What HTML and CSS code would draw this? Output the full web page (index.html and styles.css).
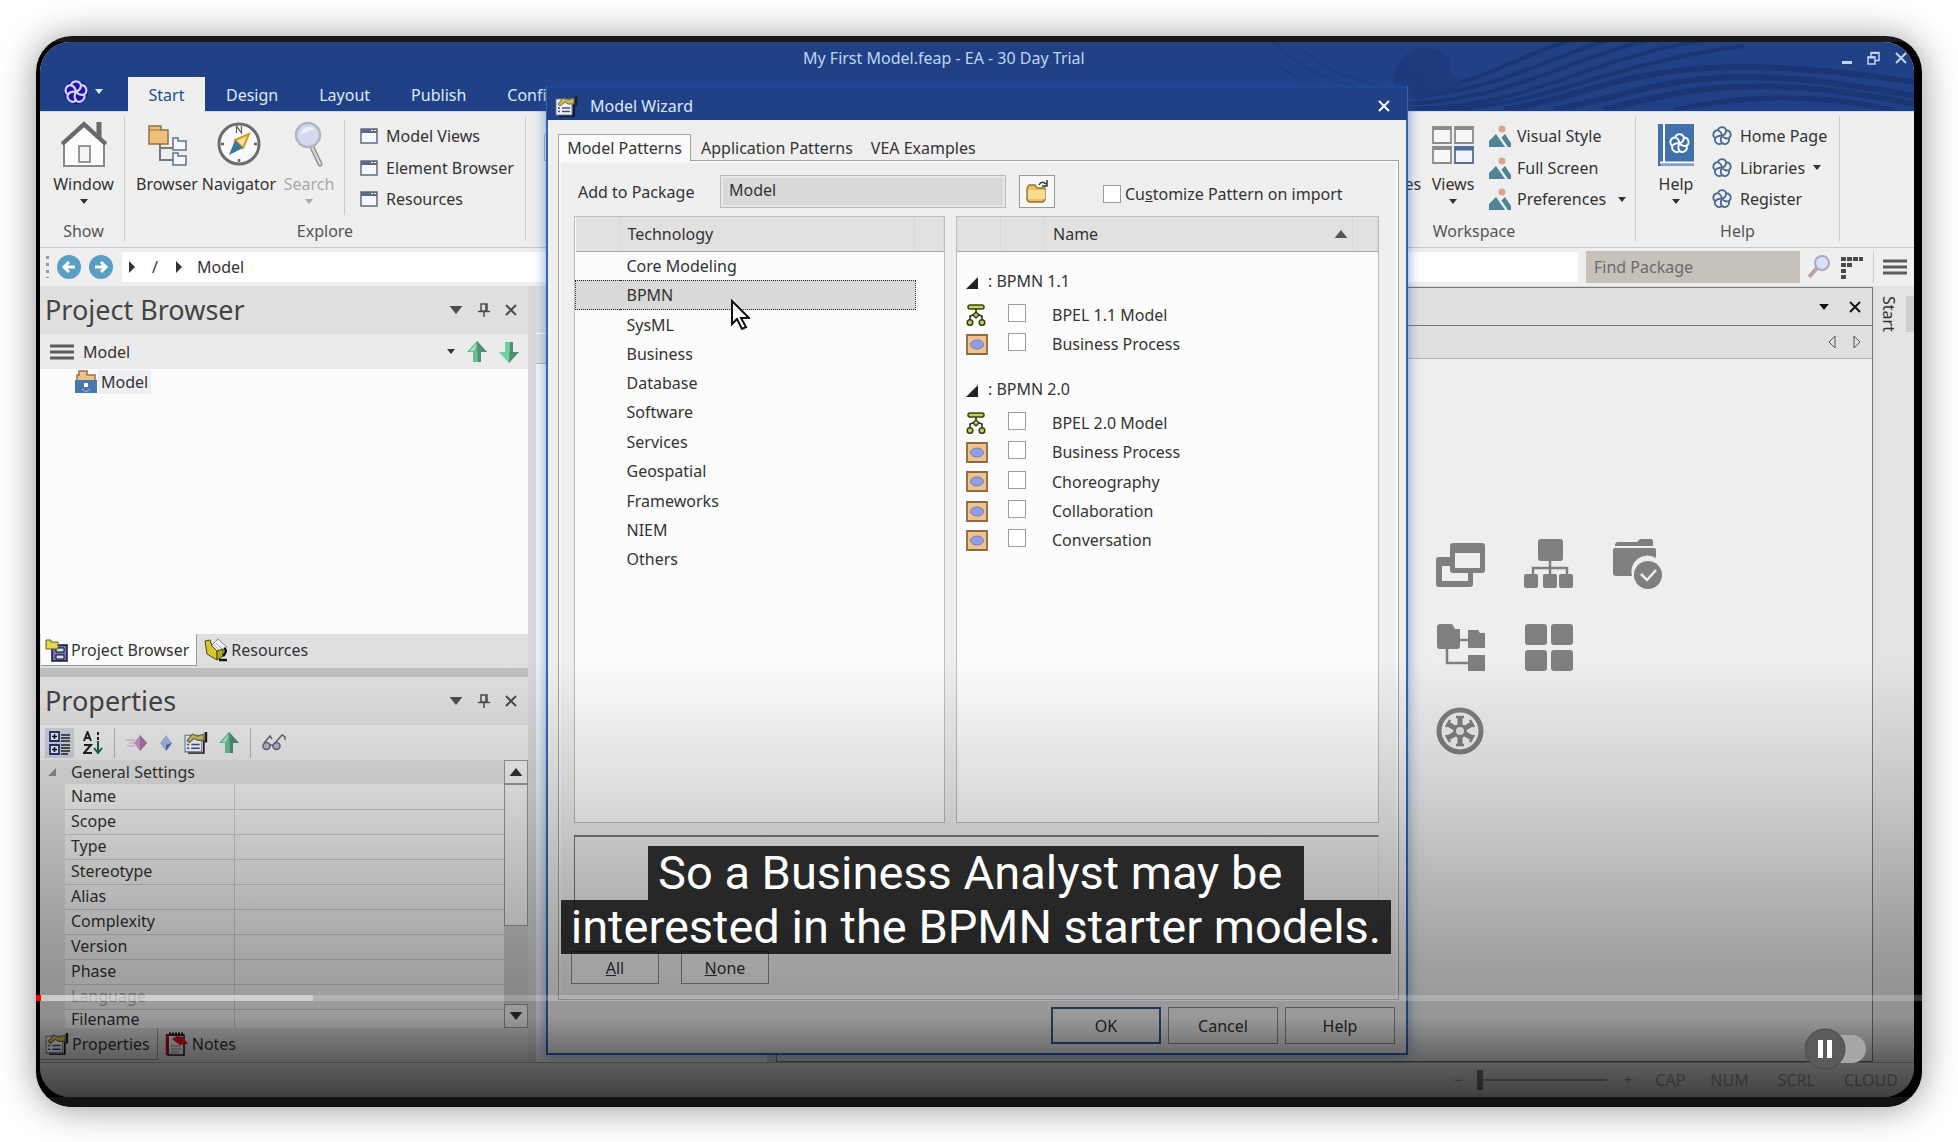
FILE: index.html
```html
<!DOCTYPE html>
<html lang="en">
<head>
<meta charset="utf-8">
<title>My First Model.feap - EA - 30 Day Trial</title>
<link rel="stylesheet" href="styles.css">
</head>
<body>
<svg class="defs" aria-hidden="true">
  <defs>
    <symbol id="caret" viewBox="0 0 8 5"><path d="M0 0h8L4 5z" fill="currentColor"/></symbol>
    <symbol id="right" viewBox="0 0 6 12"><path d="M0 0l6 6-6 6z" fill="currentColor"/></symbol>
    <symbol id="cross" viewBox="0 0 12 12"><path d="M1 1l10 10M11 1L1 11" stroke="currentColor" stroke-width="2" fill="none"/></symbol>
    <symbol id="pin" viewBox="0 0 12 14"><path d="M3 1h6v7H3zM0 8.500h12M6 9v5M8 1v7" stroke="currentColor" stroke-width="1.500" fill="none"/></symbol>
    <symbol id="bars" viewBox="0 0 24 16"><path d="M0 2h24M0 8h24M0 14h24" stroke="#5c5c5c" stroke-width="3"/></symbol>
    <symbol id="knot" viewBox="0 0 24 24">
      <g fill="none" stroke="currentColor" stroke-width="2.200">
        <path d="M7 5.100A5.200 5.200 0 0 1 17 5.100A5.200 5.200 0 0 1 20.100 14.600A5.200 5.200 0 0 1 12 20.500A5.200 5.200 0 0 1 3.900 14.600A5.200 5.200 0 0 1 7 5.100"/>
        <path d="M12 12Q17 10 17 5.100M12 12Q15.500 16 20.100 14.600M12 12Q9.200 16.500 12 20.500M12 12Q6.800 10.800 3.900 14.600M12 12Q11.500 6.700 7 5.100"/>
      </g>
    </symbol>
    <symbol id="win" viewBox="0 0 18 16"><path d="M1 1h16v14H1z" fill="#f8f8fc" stroke="#5d6b82" stroke-width="1.500"/><path d="M1 1h16v4H1z" fill="#5d6b82"/><path d="M11 2.500h2M14 2.500h2" stroke="#fff"/></symbol>
    <symbol id="scene" viewBox="0 0 22 22"><circle cx="13" cy="4" r="3.500" fill="#dba58b"/><path d="M0 22v-6l7-7 9 13z" fill="#4f8497"/><path d="M12 13l4-4 6 9v4h-4z" fill="#4f8497"/><path d="M11 12l7 10" stroke="#efefef" stroke-width="1.500"/></symbol>
    <symbol id="glass" viewBox="0 0 28 46"><path d="M17 26l8 17" stroke="#8a8a8a" stroke-width="5" stroke-linecap="round"/><path d="M17 26l8 17" stroke="#d5d5d5" stroke-width="2.500" stroke-linecap="round"/><circle cx="13" cy="14" r="12" fill="#d3daf0" stroke="#b4b4bd" stroke-width="2.500"/><path d="M5 14c2-8 9-10 15-6-5 1-9 4-15 6z" fill="#eef1fa"/></symbol>
    <symbol id="up" viewBox="0 0 20 22"><path d="M10 0l10 11h-6v10H6V11H0z" fill="#6cbb95"/><path d="M10 0l10 11h-6v10h-3z" fill="#4d8f70"/><path d="M10 2L3 10h4z" fill="#a5ecc8"/></symbol>
    <symbol id="down" viewBox="0 0 20 22"><path d="M10 22L0 11h6V1h8v10h6z" fill="#6fd0a0"/><path d="M10 22l10-11h-6V1h-3z" fill="#4d8f70"/></symbol>
    <symbol id="card" viewBox="0 0 23 21"><path d="M4 20h15V8" stroke="#111" stroke-width="1.500" fill="none"/><path d="M1 3h16v16H1z" fill="#f4f4f8" stroke="#6a7690"/><path d="M3 12h2M7 12h8M3 15.500h2M7 15.500h8" stroke="#3a4a90" stroke-width="1.500"/><path d="M3 8l5-6 5 2 6-2v6h-6l-3-2-5 4z" fill="#c6bd62" stroke="#6b6631"/><path d="M21 0v10" stroke="#222" stroke-width="2.500"/></symbol>
    <symbol id="flow" viewBox="0 0 20 22"><g fill="#c3cf55" stroke="#3c3f14" stroke-width="1.500"><path d="M10 5v4M4 17v-5l6-2 6 2v5" fill="none" stroke="#222"/><rect x="2" y="1" width="16" height="4" rx="2"/><path d="M10 8l3 3-3 3-3-3z"/><circle cx="4" cy="18.500" r="2.800"/><circle cx="16" cy="18.500" r="2.800"/></g></symbol>
    <symbol id="diagram" viewBox="0 0 22 21"><path d="M1 1h20v19H1z" fill="#efc291" stroke="#8a6a3e" stroke-width="1.800"/><ellipse cx="11" cy="10.500" rx="6.500" ry="4.500" fill="#909ee4" stroke="#777ba8"/></symbol>
  </defs>
</svg>

<main class="player">
  <div class="screen">
    <header class="banner">
      <svg class="waves" viewBox="0 0 640 68" preserveAspectRatio="xMaxYMax slice" aria-hidden="true">
        <g fill="none" stroke="#1b3675" stroke-width="4">
          <path d="M120 50C220 46 250 2 330-8M120 56C230 52 280 8 360-8M120 62C240 60 290 16 390-6M130 67C260 66 300 20 430-2M170 68C290 60 320 24 470 4"/>
          <path d="M230 68C340 50 380 0 640 40" stroke-width="6"/><path d="M280 68C390 46 430 14 640 54" stroke-width="6"/><path d="M330 68C420 44 490 32 640 62" stroke-width="6"/><path d="M400 68C460 54 540 50 620 68" stroke-width="5"/>
          <path d="M0 0c40 40 70 40 100 50M20 0c30 30 60 38 90 45M0 20c30 24 50 26 80 34" stroke-width="1"/>
        </g>
        <path d="M120 40c0-20 14-34 30-34s28 10 26 20 10 8 10 16-20 6-30 12-36 4-36-14z" fill="#1c3a7d"/>
      </svg>
      <div class="caption-bar">
        <span class="app-title">My First Model.feap - EA - 30 Day Trial</span>
        <div class="win-buttons">
          <button aria-label="Minimize"><svg width="10" height="12"><path d="M0 10.500h10" stroke="currentColor" stroke-width="3"/></svg></button>
          <button aria-label="Restore"><svg width="13" height="14"><path d="M1 6h7v7H1zM4 6V1.500h8v8H8" fill="none" stroke="currentColor" stroke-width="1.500"/><path d="M1 6.500h7M4 2h8" stroke="currentColor" stroke-width="2"/></svg></button>
          <button aria-label="Close"><svg width="12" height="12"><use href="#cross"/></svg></button>
        </div>
      </div>
      <nav class="ribbon-tabs">
        <button class="logo" aria-label="Application menu"><svg class="logo-knot" width="24" height="24"><use href="#knot"/></svg><svg width="8" height="5"><use href="#caret"/></svg></button>
        <button class="rtab on">Start</button><button class="rtab">Design</button><button class="rtab">Layout</button><button class="rtab">Publish</button><button class="rtab">Configure</button>
      </nav>
    </header>

    <section class="ribbon">
      <div class="group g-show">
        <div class="tools">
          <button class="big"><svg width="46" height="48" viewBox="0 0 46 48"><path d="M3 24L23 6l20 18v22H3z" fill="#fdfdfd" stroke="#8b8b8b" stroke-width="2"/><path d="M38 2v16" stroke="#6a6a6a" stroke-width="5"/><path d="M1 24L23 4l22 20" fill="none" stroke="#6a6a6a" stroke-width="4"/><path d="M18 26h11v16H18z" fill="#f4f4f4" stroke="#777" stroke-width="1.500"/></svg><span>Window</span><svg class="c" width="8" height="5"><use href="#caret"/></svg></button>
        </div>
        <span class="gname">Show</span>
      </div>
      <div class="group g-explore">
        <div class="tools">
          <button class="big w64"><svg width="40" height="48" viewBox="0 0 40 48"><path d="M13 24v17M12 28h14M12 40h14" stroke="#777" stroke-width="2" fill="none"/><path d="M2 24V6h12v4h7v14z" fill="#eec07c" stroke="#8d7247" stroke-width="1.500"/><path d="M2 10h12" stroke="#8d7247"/><path d="M26 30V18h5v3h8v9zM26 45V33h5v3h8v9z" fill="#f6f8fc" stroke="#5f738e" stroke-width="1.500"/></svg><span>Browser</span></button>
          <button class="big w80"><svg width="46" height="48" viewBox="0 0 46 48"><circle cx="23" cy="24" r="20" fill="#fafafa" stroke="#6d6d6d" stroke-width="3"/><path d="M33 14L19 20l8 8z" fill="#fbe3a6" stroke="#d49a21" stroke-width="2"/><path d="M19 20l8 8-14 7z" fill="#397995"/><path d="M20.500 13V6l5 7V6" fill="none" stroke="#666" stroke-width="1.300"/><path d="M5 24h3M38 24h3M23 39v3" stroke="#666" stroke-width="2.500"/></svg><span>Navigator</span></button>
          <button class="big w60 off" disabled><svg width="28" height="48"><use href="#glass"/></svg><span>Search</span><svg class="c" width="8" height="5"><use href="#caret"/></svg></button>
          <div class="rows sep">
            <button><svg width="18" height="16"><use href="#win"/></svg>Model Views</button>
            <button><svg width="18" height="16"><use href="#win"/></svg>Element Browser</button>
            <button><svg width="18" height="16"><use href="#win"/></svg>Resources</button>
          </div>
        </div>
        <span class="gname">Explore</span>
      </div>
      <div class="group g-fill"><span class="stub"></span></div>
      <div class="group g-space">
        <div class="tools">
          <button class="big w92"><svg width="40" height="48"></svg><span>Perspectives</span></button>
          <button class="big w66"><svg width="44" height="48" viewBox="0 0 44 48"><g fill="#f7f7f7" stroke="#8b8b8b" stroke-width="1.800"><path d="M2 7h18v16H2zM24 7h18v16H24zM2 27h18v16H2z"/><path d="M24 27h18v16H24z" fill="#eef3fc" stroke="#5a6c93"/></g><path d="M2 8.500h18M24 8.500h18M2 28.500h18" stroke="#8b8b8b" stroke-width="3"/><path d="M24 28.500h18" stroke="#4a6ba3" stroke-width="4"/></svg><span>Views</span><svg class="c" width="8" height="5"><use href="#caret"/></svg></button>
          <div class="rows tight">
            <button><svg width="22" height="22"><use href="#scene"/></svg>Visual Style</button>
            <button><svg width="22" height="22"><use href="#scene"/></svg>Full Screen</button>
            <button><svg width="22" height="22"><use href="#scene"/></svg>Preferences<svg class="more" width="8" height="5"><use href="#caret"/></svg></button>
          </div>
        </div>
        <span class="gname">Workspace</span>
      </div>
      <div class="group g-help">
        <div class="tools">
          <button class="big w52"><svg width="36" height="48" viewBox="0 0 36 48"><path d="M0 4h36v42H0z" fill="#4170ab"/><path d="M6 4v38M2 42.500h34" stroke="#fff" stroke-width="2"/><path d="M3 45h33" stroke="#c8d4e6"/><svg x="11" y="13" width="21" height="21" color="#fff"><use href="#knot"/></svg></svg><span>Help</span><svg class="c" width="8" height="5"><use href="#caret"/></svg></button>
          <div class="rows knots">
            <button><svg width="20" height="20"><use href="#knot"/></svg>Home Page</button>
            <button><svg width="20" height="20"><use href="#knot"/></svg>Libraries<svg width="8" height="5"><use href="#caret"/></svg></button>
            <button><svg width="20" height="20"><use href="#knot"/></svg>Register</button>
          </div>
        </div>
        <span class="gname">Help</span>
      </div>
    </section>

    <section class="pathbar">
      <span class="grip"></span>
      <button class="nav" aria-label="Back"><svg width="24" height="24"><circle cx="12" cy="12" r="12" fill="#5a9fc2"/><path d="M18 12H7M12 7l-5 5 5 5" fill="none" stroke="#fff" stroke-width="3"/></svg></button>
      <button class="nav" aria-label="Forward"><svg width="24" height="24"><circle cx="12" cy="12" r="12" fill="#5a9fc2"/><path d="M6 12h11M12 7l5 5-5 5" fill="none" stroke="#fff" stroke-width="3"/></svg></button>
      <div class="crumbs"><svg width="6" height="12"><use href="#right"/></svg><span class="slash">/</span><svg width="6" height="12"><use href="#right"/></svg><span>Model</span></div>
      <input class="find" type="text" placeholder="Find Package" aria-label="Find Package">
      <button class="nav" aria-label="Search"><svg width="24" height="24"><path d="M2 22l8-9" stroke="#b9a1a9" stroke-width="4"/><circle cx="15" cy="8" r="7" fill="#dbe0f4" stroke="#a9a9c4" stroke-width="2"/></svg></button>
      <button class="nav dots" aria-label="Options"><svg width="24" height="24"><path d="M1 4h22M1 10h11M1 16h5M1 22h5" stroke="#4a4a4a" stroke-width="4" stroke-dasharray="5 1"/></svg></button>
      <button class="nav menu" aria-label="Menu"><svg width="24" height="16"><use href="#bars"/></svg></button>
    </section>

    <section class="work">
      <aside class="left">
        <div class="phead"><h2>Project Browser</h2><svg width="14" height="8"><use href="#caret"/></svg><svg width="12" height="14"><use href="#pin"/></svg><svg width="12" height="12"><use href="#cross"/></svg></div>
        <div class="modelbar"><svg width="24" height="16"><use href="#bars"/></svg><span class="grow">Model</span><svg width="8" height="5"><use href="#caret"/></svg><svg width="20" height="22"><use href="#up"/></svg><svg width="20" height="22"><use href="#down"/></svg></div>
        <div class="tree"><div class="node"><svg width="22" height="23" viewBox="0 0 22 23"><path d="M2 12V5h2V1h8v4h8v7z" fill="#edc08e" stroke="#9b7146" stroke-width="1.500"/><path d="M0 10h22v13H0z" fill="#4878ae"/><path d="M9 13h4v4H9z" fill="#fff"/><path d="M7 19l4 3 4-3" stroke="#a5c0e0" fill="none"/></svg><span>Model</span></div></div>
        <div class="ptabs">
          <button class="ptab on"><svg width="23" height="24" viewBox="0 0 23 24"><path d="M7 7h15v16H7z" fill="#6d73b8" stroke="#15153c" stroke-width="1.500"/><path d="M11 10h8v4h-8zM11 17h8v4h-8z" fill="#d8daf2" stroke="#111"/><path d="M1 11V2h5v2h7v7z" fill="#e0d74d" stroke="#65601a"/></svg>Project Browser</button>
          <button class="ptab"><svg width="24" height="24" viewBox="0 0 24 24"><path d="M7 8l7-7 9 8-7 7z" fill="#f4f4f4" stroke="#888"/><path d="M12 5l6 6M10 7l6 6" stroke="#aaa"/><path d="M1 3l5-1 2 6 5 5v9L3 16z" fill="#d3c72c" stroke="#4c4710"/><path d="M13 13l6-2v7l-6 4z" fill="#b3a71e" stroke="#4c4710"/><path d="M20 10c3 2 2 5-1 8M15 22h8" stroke="#111" stroke-width="2.500" fill="none"/></svg>Resources</button>
        </div>
        <div class="split"></div>
        <div class="phead"><h2>Properties</h2><svg width="14" height="8"><use href="#caret"/></svg><svg width="12" height="14"><use href="#pin"/></svg><svg width="12" height="12"><use href="#cross"/></svg></div>
        <div class="propbar">
          <button class="pressed" aria-label="Categorized"><svg width="22" height="24" viewBox="0 0 22 24"><path d="M1 1h9v9H1zM1 14h9v9H1z" fill="#e8ecfa" stroke="#26336b" stroke-width="1.800"/><path d="M5.500 3v5M3 5.500h5M5.500 16v5M3 18.500h5" stroke="#111" stroke-width="1.500"/><path d="M12 4h9M12 7h9M12 10h9M12 14h9M12 17h9M12 20h9M12 23h7" stroke="#222" stroke-width="1.500"/></svg></button>
          <button aria-label="Sort alphabetically"><svg width="20" height="24" viewBox="0 0 20 24"><path d="M1 10l3.500-9L8 10M2 7h5M1 14h7l-7 8h8" fill="none" stroke="#222" stroke-width="2"/><path d="M15 1v3M15 6v3" stroke="#222" stroke-width="2"/><path d="M15 10v11M11 17l4 5 4-5" fill="none" stroke="#19603f" stroke-width="2"/></svg></button>
          <i></i>
          <button aria-label="Element"><svg width="22" height="20" viewBox="0 0 22 20"><path d="M0 7h9M3 10h6M1 13h8" stroke="#c9a8c4"/><path d="M14 2l7 8-7 8-6-8z" fill="#cb8fc0"/><path d="M14 2l7 8-7 8z" fill="#a9709f"/></svg></button>
          <button aria-label="Item"><svg width="14" height="18" viewBox="0 0 14 18"><path d="M7 1l6 8-6 8-6-8z" fill="#98b6dc"/><path d="M7 17l6-8-6 2z" fill="#4e6c94"/></svg></button>
          <button aria-label="Properties"><svg width="24" height="22"><use href="#card"/></svg></button>
          <button aria-label="Up"><svg width="20" height="22"><use href="#up"/></svg></button>
          <i></i>
          <button aria-label="Inspect"><svg width="24" height="18" viewBox="0 0 24 18"><g fill="#b9b4cf" stroke="#65657a" stroke-width="1.500"><circle cx="4.500" cy="12" r="3.500"/><circle cx="14.500" cy="12" r="3.500"/><path d="M2 9l6-7 2 3M13 9l7-8 3 2v3M8 11h3" fill="none"/></g></svg></button>
        </div>
        <div class="props">
          <div class="pscroll">
            <div class="cat"><svg width="8" height="8"><path d="M8 0v8H0z" fill="#8c8c8c"/></svg>General Settings</div>
            <table class="ptable">
              <tr><th>Name</th><td></td></tr><tr><th>Scope</th><td></td></tr><tr><th>Type</th><td></td></tr><tr><th>Stereotype</th><td></td></tr><tr><th>Alias</th><td></td></tr><tr><th>Complexity</th><td></td></tr><tr><th>Version</th><td></td></tr><tr><th>Phase</th><td></td></tr><tr class="dim"><th>Language</th><td></td></tr><tr class="tail"><th>Filename</th><td></td></tr>
            </table>
          </div>
          <div class="sbar"><button aria-label="Scroll up"><svg class="flip" width="14" height="8"><use href="#caret"/></svg></button><span class="thumb"></span><button class="end" aria-label="Scroll down"><svg width="14" height="8"><use href="#caret"/></svg></button></div>
        </div>
        <div class="ptabs last">
          <button class="ptab on"><svg width="24" height="22"><use href="#card"/></svg>Properties</button>
          <button class="ptab notes"><svg width="24" height="24" viewBox="0 0 24 24"><path d="M3 3h16v20H3z" fill="#e9e9e9" stroke="#111" stroke-width="1.500"/><path d="M2 2v21" stroke="#c00020" stroke-width="2.500"/><path d="M4 2h14" stroke="#111" stroke-width="3" stroke-dasharray="2 1"/><path d="M6 14h10M6 17h10M6 20h8" stroke="#888"/><path d="M7 7l5-3 6 1 5 7-8 1z" fill="#e0101e"/></svg>Notes</button>
        </div>
      </aside>
      <div class="doc0"><div class="d-head"></div><div class="d-tabs"></div></div>
      <div class="doc">
        <div class="d-head"><svg width="10" height="6"><use href="#caret"/></svg><svg width="12" height="12"><use href="#cross"/></svg></div>
        <div class="d-tabs"><svg width="8" height="14"><path d="M7 1v12L1 7z" fill="none" stroke="#555"/></svg><svg width="8" height="14"><path d="M1 1v12l6-6z" fill="none" stroke="#555"/></svg></div>
        <div class="tiles">
          <svg viewBox="0 0 50 50"><path d="M3 18h12v5H6v19h26v-9h5v12a3 3 0 01-3 3H3a3 3 0 01-3-3V21a3 3 0 013-3z" fill="#7f7f7f"/><path d="M0 20h15v7H0z" fill="#7f7f7f"/><path fill-rule="evenodd" d="M17 4h29a3 3 0 013 3v24a3 3 0 01-3 3H17a3 3 0 01-3-3V7a3 3 0 013-3zm2 10v15h25V14z" fill="#7f7f7f"/></svg>
          <svg viewBox="0 0 50 50"><g fill="#7f7f7f"><rect x="14" width="25" height="22" rx="3"/><rect y="35" width="14" height="14" rx="2"/><rect x="19" y="35" width="14" height="14" rx="2"/><rect x="35" y="35" width="14" height="14" rx="2"/></g><path d="M26 22v14M9 36v-7h34v7" fill="none" stroke="#7f7f7f" stroke-width="2.500"/></svg>
          <svg viewBox="0 0 50 50"><path d="M3 7V5l2-2h20l3-3h12l1 2v5zM2 9h40a2 2 0 012 2v8a16 16 0 00-24 18H4a3 3 0 01-3-3V11z" fill="#7f7f7f"/><circle cx="36" cy="36" r="14" fill="#7f7f7f"/><path d="M29 35l6 6 9-10" fill="none" stroke="#eee" stroke-width="2.500"/></svg>
          <svg viewBox="0 0 50 50"><g fill="#7f7f7f"><path d="M3 1h13l3 5h5v17a3 3 0 01-3 3H4a3 3 0 01-3-3V3zM32 7h10l2 3h5v15H32zM32 32h17v16H32z"/></g><path d="M24 17h9M11 26v14h22" fill="none" stroke="#7f7f7f" stroke-width="2.500"/></svg>
          <svg viewBox="0 0 50 50"><g fill="#7f7f7f"><rect x="1" y="1" width="22" height="21" rx="3"/><rect x="27" y="1" width="22" height="21" rx="3"/><rect x="1" y="27" width="22" height="21" rx="3"/><rect x="27" y="27" width="22" height="21" rx="3"/></g></svg>
          <svg class="third" viewBox="0 0 50 50"><circle cx="24" cy="24" r="21" fill="none" stroke="#7f7f7f" stroke-width="5"/><g stroke="#7f7f7f" stroke-width="5"><path d="M24 9v30M11 16.500l26 15M37 16.500l-26 15"/></g><path d="M20 10h8M20 38h8M10 20l4-7M34 35l4-7M34 13l4 7M10 28l4 7" stroke="#7f7f7f" stroke-width="2.500"/><circle cx="24" cy="24" r="7" fill="#7f7f7f"/><circle cx="24" cy="24" r="4" fill="#e2e2e2"/></svg>
        </div>
      </div>
      <aside class="side"><span>Start</span></aside>
    </section>

    <footer class="status"><span class="sgn">−</span><input type="range" min="0" max="100" value="0" aria-label="Zoom"><span class="sgn">+</span><span class="cap">CAP</span><span class="num">NUM</span><span class="scrl">SCRL</span><span>CLOUD</span></footer>

    <div class="dialog" role="dialog" aria-label="Model Wizard">
      <div class="d-title"><svg width="23" height="21"><use href="#card"/></svg><span>Model Wizard</span><button aria-label="Close"><svg width="12" height="12"><use href="#cross"/></svg></button></div>
      <div class="d-tabrow"><button class="on">Model Patterns</button><button>Application Patterns</button><button>VEA Examples</button></div>
      <div class="d-panel">
        <div class="form">
          <label class="pkg" for="pkg">Add to Package</label>
          <input id="pkg" type="text" value="Model" readonly>
          <button class="open" aria-label="Browse"><svg width="24" height="24" viewBox="0 0 24 24"><path d="M2 20V8l2-3h6l2 3h8v12l-2 2H4z" fill="#eebf5f" stroke="#94702a" stroke-width="1.300"/><path d="M3 10h17v9H3z" fill="#f8dc92"/><path d="M14 5c2-4 5-3 7-1M22 0v6h-5" fill="none" stroke="#334" stroke-width="1.500"/></svg></button>
          <label class="cust"><input type="checkbox"><span>Cu<u>s</u>tomize Pattern on import</span></label>
        </div>
        <div class="lists">
          <div class="list tech">
            <table>
              <thead><tr><th class="c0"></th><th>Technology</th><th class="c9"></th></tr></thead>
              <tbody><tr><td></td><td>Core Modeling</td></tr><tr class="sel"><td></td><td>BPMN</td></tr><tr><td></td><td>SysML</td></tr><tr><td></td><td>Business</td></tr><tr><td></td><td>Database</td></tr><tr><td></td><td>Software</td></tr><tr><td></td><td>Services</td></tr><tr><td></td><td>Geospatial</td></tr><tr><td></td><td>Frameworks</td></tr><tr><td></td><td>NIEM</td></tr><tr><td></td><td>Others</td></tr></tbody>
            </table>
          </div>
          <div class="list names">
            <table>
              <thead><tr><th class="c0"></th><th class="c1"></th><th>Name<svg class="flip" width="14" height="8"><use href="#caret"/></svg></th><th class="c8"></th></tr></thead>
              <tbody>
                <tr class="grp"><td colspan="4"><svg width="12" height="12"><path d="M12 0v12H0z" fill="#222"/></svg>: BPMN 1.1</td></tr>
                <tr><td><svg width="20" height="22"><use href="#flow"/></svg></td><td><input type="checkbox" id="n1"></td><td><label for="n1">BPEL 1.1 Model</label></td></tr>
                <tr><td><svg width="22" height="21"><use href="#diagram"/></svg></td><td><input type="checkbox" id="n2"></td><td><label for="n2">Business Process</label></td></tr>
                <tr class="grp"><td colspan="4"><svg width="12" height="12"><path d="M12 0v12H0z" fill="#222"/></svg>: BPMN 2.0</td></tr>
                <tr><td><svg width="20" height="22"><use href="#flow"/></svg></td><td><input type="checkbox" id="n3"></td><td><label for="n3">BPEL 2.0 Model</label></td></tr>
                <tr><td><svg width="22" height="21"><use href="#diagram"/></svg></td><td><input type="checkbox" id="n4"></td><td><label for="n4">Business Process</label></td></tr>
                <tr><td><svg width="22" height="21"><use href="#diagram"/></svg></td><td><input type="checkbox" id="n5"></td><td><label for="n5">Choreography</label></td></tr>
                <tr><td><svg width="22" height="21"><use href="#diagram"/></svg></td><td><input type="checkbox" id="n6"></td><td><label for="n6">Collaboration</label></td></tr>
                <tr><td><svg width="22" height="21"><use href="#diagram"/></svg></td><td><input type="checkbox" id="n7"></td><td><label for="n7">Conversation</label></td></tr>
              </tbody>
            </table>
          </div>
        </div>
        <div class="descr"></div>
        <div class="picks"><button><u>A</u>ll</button><button><u>N</u>one</button></div>
      </div>
      <div class="d-foot"><button class="ok">OK</button><button>Cancel</button><button>Help</button></div>
      <svg class="cursor" width="19" height="32" viewBox="0 0 19 32"><path d="M1 2v23l5-5 5 10 4-2-5-9h8z" fill="#fff" stroke="#111" stroke-width="2"/></svg>
    </div>
  </div>

  <div class="shade"></div>
  <div class="captions"><span>So a Business Analyst may be&nbsp;</span><span>interested in the BPMN starter models.</span></div>
  <div class="progress" role="progressbar" aria-label="Playback"><span class="loaded"></span><span class="played"></span></div>
  <button class="autoplay" role="switch" aria-checked="false" aria-label="Autoplay"><svg width="62" height="42" viewBox="0 0 62 42"><path d="M20 7h27a14 14 0 010 28H20z" fill="#a6a6a6"/><circle cx="20" cy="21" r="20" fill="#5b5b5b" stroke="#4b4b4b"/><path d="M15.500 12v18M24.500 12v18" stroke="#fff" stroke-width="5"/></svg></button>
</main>
</body>
</html>
```

FILE: styles.css
```css
* { box-sizing: border-box; }
body { margin: 0; padding: 36px; background: #fff; font: 16px/20px "Noto Sans", "Open Sans", sans-serif; color: #333; }
button, input { font: inherit; color: inherit; }
button { border: 0; padding: 0; background: none; }
svg { display: block; flex: none; }
h2 { margin: 0; font-weight: 400; }
.defs { position: absolute; width: 0; height: 0; }
.flip { transform: rotate(180deg); }

.player { position: relative; min-height: calc(100vh - 72px); display: flex; border-radius: 36px; overflow: hidden; background: linear-gradient(#191919, #191919) top / 100% 6px no-repeat, #000; padding: 6px 8px 10px 4px; }
body::before { content: ""; position: absolute; inset: 36px; border-radius: 36px; box-shadow: 0 2px 36px rgba(0, 0, 0, .42); }
.screen { position: relative; flex: 1; min-width: 0; display: flex; flex-direction: column; background: #efefef; border-radius: 30px; overflow: hidden; }

/* title and ribbon tabs */
.banner { position: relative; height: 70px; background: #214187; color: #dce9fb; display: flex; flex-direction: column; justify-content: space-between; border-bottom: 1px solid #c8dcfa; }
.waves { position: absolute; right: 0; top: 0; width: 640px; height: 68px; }
.caption-bar { position: relative; height: 32px; display: flex; align-items: center; padding: 0 7px 0 763px; color: #bfd5f3; }
.app-title { flex: 1; white-space: nowrap; }
.win-buttons { display: flex; align-items: center; gap: 15px; }
.ribbon-tabs { position: relative; display: flex; height: 35px; margin-bottom: -1px; }
.logo { width: 88px; display: flex; align-items: center; gap: 7px; padding: 0 0 6px 24px; }
.logo-knot { border-radius: 50%; background: #1c14a8; color: #d7d4ff; }
.rtab { padding: 0 20px; margin-right: 1px; white-space: nowrap; }
.rtab.on { background: #efefef; color: #1d4f93; width: 77px; }

/* ribbon */
.ribbon { display: flex; height: 136px; padding: 4px 74px 6px 0; border-bottom: 1px solid #c9c9c9; }
.ribbon button { color: #333; }
.group { border-right: 1px solid #cdcdcd; display: flex; flex-direction: column; justify-content: space-between; }
.tools { display: flex; height: 99px; padding-top: 4px; }
.gname { text-align: center; color: #555; }
.g-show { width: 85px; padding-left: 3px; }
.g-explore { width: 401px; }
.g-explore .tools { padding-left: 10px; }
.g-fill { flex: 1; border: 0; padding: 18px; }
.stub { width: 60px; height: 27px; border: 1px solid #b5b5bd; }
.g-space { width: 323px; }
.g-space .tools { padding-left: 15px; }
.g-help { width: 204px; }
.g-help .tools { padding-left: 14px; }
.big { flex: none; width: 100%; display: flex; flex-direction: column; align-items: center; white-space: nowrap; }
.big span { margin-top: 6px; }
.big .c { margin-top: 5px; }
.w52 { width: 52px; } .w60 { width: 60px; } .w64 { width: 64px; } .w66 { width: 66px; } .w80 { width: 80px; } .w92 { width: 92px; }
.ribbon .off { color: #a9a9a9; }
.rows { display: flex; flex-direction: column; justify-content: space-between; }
.rows button { height: 32px; display: flex; align-items: center; gap: 8px; white-space: nowrap; }
.sep { border-left: 1px solid #cdcdcd; margin-left: 5px; padding-left: 15px; }
.tight { padding-left: 3px; } .tight button { gap: 6px; }
.more { margin-left: 6px; }
.knots { padding-left: 10px; }
.knots button > svg:first-child { color: #4a6994; }

/* path bar */
.pathbar { display: flex; align-items: center; height: 38px; padding: 0 7px 0 6px; }
.grip { width: 3px; height: 22px; margin-right: 8px; background: repeating-linear-gradient(#9a9a9a 0 3px, transparent 3px 7px); }
.nav { margin-right: 8px; }
.crumbs { flex: 1; height: 30px; margin: 0 8px 0 1px; padding-left: 7px; background: #fff; display: flex; align-items: center; gap: 15px; color: #333; }
.slash { padding: 0 3px 0 2px; }
.find { width: 214px; height: 32px; margin-right: 7px; padding: 0 8px; border: 0; background: #c6c1ba; }
.find::placeholder { color: #6c6a68; opacity: 1; }
.dots { margin: 0 9px 0 1px; }
.menu { margin: 0; padding: 8px 0 8px 9px; border-left: 1px solid #ccc; }

/* workspace */
.work { flex: 1; display: flex; min-height: 0; background: #d9d9d9; }
.left { width: 488px; flex: none; display: flex; flex-direction: column; background: #e0e0e0; min-height: 0; }
.phead { height: 48px; display: flex; align-items: center; gap: 15px; padding: 0 11px 0 5px; color: #4d4d4d; }
.phead h2 { flex: 1; font-size: 27px; line-height: 36px; color: #444; }
.modelbar { height: 35px; display: flex; align-items: center; gap: 12px; padding: 0 9px 0 10px; background: #ebebeb; }
.modelbar span { flex: 1; margin-left: -3px; }
.tree { height: 265px; background: #fcfcfc; }
.node { display: flex; padding: 1px 0 0 35px; gap: 1px; }
.node span { background: #efeff4; padding: 2px 3px; }
.ptabs { height: 34px; display: flex; padding-left: 1px; }
.ptab { display: flex; align-items: center; gap: 3px; height: 32px; padding: 0 7px 0 4px; white-space: nowrap; }
.ptab.on { background: #fcfcfc; border-right: 1px solid #999; border-bottom: 1px solid #999; }
.ptab + .ptab { padding-left: 7px; }
.split { height: 9px; background: #c1c1c1; }
.propbar { height: 35px; display: flex; align-items: center; gap: 7px; padding-left: 5px; background: #ebebeb; }
.propbar button { padding: 0 2px; }
.propbar .pressed { background: #ccd0dc; padding: 3px 3px 3px 4px; }
.propbar i { width: 1px; height: 30px; margin: 0 2px; background: #b5b5b5; }
.props { display: flex; height: 268px; }
.pscroll { flex: 1; overflow: hidden; height: 268px; }
.cat { height: 24px; display: flex; align-items: center; gap: 15px; padding-left: 8px; }
.ptable { width: calc(100% - 25px); margin-left: 25px; border-collapse: collapse; background: #f3f3f3; }
.ptable tr { height: 25px; border-bottom: 1px solid #cfcfcf; }
.ptable .tail { height: 19px; border: 0; }
.ptable th { width: 169px; padding: 0 0 0 6px; font-weight: 400; line-height: 19px; text-align: left; border-right: 1px solid #cfcfcf; }
.ptable td { padding: 0; }
.dim th { color: #aaa; }
.sbar { width: 24px; height: 268px; display: flex; flex-direction: column; background: #d0d0d0; }
.sbar button, .thumb { height: 24px; border: 1px solid #999; background: #f2f2f2; display: flex; align-items: center; justify-content: center; }
.thumb { height: 142px; }
.end { margin-top: auto; }
.last .ptab.on { background: #e0e0e0; }

.doc0 { width: 231px; margin: 0 9px 0 8px; background: #f8f8fc; }
.doc { flex: 1; border: 1px solid #777; background: #eee; margin-top: 1px; }
.d-head { height: 38px; display: flex; align-items: center; justify-content: flex-end; gap: 20px; padding-right: 11px; background: #e0e0e0; border-bottom: 1px solid #777; color: #111; }
.doc0 .d-head { height: 48px; border-color: #fff; }
.doc0 .d-tabs { height: 30px; }
.d-tabs { height: 33px; display: flex; align-items: center; justify-content: flex-end; gap: 17px; padding-right: 11px; background: #e0e0e0; border-bottom: 1px solid #b5b5b5; }
.tiles { margin: 180px 0 0 659px; display: grid; grid-template-columns: repeat(3, 50px); gap: 34px 38px; }
.tiles svg { width: 50px; height: 50px; }
.tiles .third { grid-column: 1; }
.side { width: 41px; padding: 10px 0 0 6px; background: linear-gradient(#cfcfcf, #cfcfcf) right 10px / 8px 36px no-repeat, #e3e3e3; }
.side span { writing-mode: vertical-rl; display: block; }

.status { height: 35px; display: flex; align-items: center; justify-content: flex-end; padding-right: 16px; border-top: 1px solid #aaa; background: #eaeaea; color: #9f9f9f; }
.sgn { width: 12px; text-align: center; }
.status input { appearance: none; width: 130px; height: 20px; margin: 0 15px 0 13px; background: linear-gradient(#a0a0a0, #a0a0a0) center / 100% 2px no-repeat; }
.status input::-webkit-slider-thumb { appearance: none; width: 6px; height: 20px; background: #777; }
.cap { margin: 0 25px 0 21px; } .num { margin-right: 29px; } .scrl { margin-right: 29px; }

/* model wizard */
.dialog { position: absolute; top: 44px; left: 0; right: 0; margin: 0 auto; width: 862px; border: 2px solid #2e66b4; border-top: 0; background: #efefef; box-shadow: 0 0 12px rgba(40, 80, 160, .55); }
.d-title { height: 34px; margin: 0 -1px; padding: 4px 17px 0 8px; background: #214187; color: #dce9fb; display: flex; align-items: center; gap: 12px; border-top: 2px solid #19479c; }
.d-title span { flex: 1; }
.d-title button { color: #fff; }
.d-tabrow { display: flex; height: 40px; padding: 14px 0 0 10px; }
.d-tabrow button { height: 27px; padding: 0 9px; white-space: nowrap; }
.d-tabrow .on { position: relative; width: 133px; padding: 0; margin-right: 1px; background: #fbfbfb; border: 1px solid #a5a5a5; border-bottom: 0; }
.d-panel { margin: 0 7px 0 10px; padding: 14px 19px 15px 15px; border: 1px solid #a5a5a5; box-shadow: inset 0 0 0 2px #f8f8f8; }
.form { display: flex; align-items: center; height: 33px; margin-bottom: 8px; }
.pkg { width: 146px; padding-left: 4px; }
.form input[type=text] { width: 286px; height: 33px; padding: 0 8px 4px; border: 1px solid #bbb; background: #d9d9d9; box-shadow: inset 0 0 0 2px #e8e8e8; }
.open { width: 36px; height: 33px; margin: 0 48px 0 13px; border: 1px solid #999; background: #f8f8f8; display: flex; align-items: center; justify-content: center; }
.cust { display: flex; align-items: center; gap: 4px; padding-top: 4px; white-space: nowrap; }
input[type=checkbox] { appearance: none; width: 18px; height: 18px; margin: 0; border: 1px solid #9d9d9d; background: #fff; display: block; }
.lists { display: flex; gap: 11px; height: 607px; }
.list { border: 1px solid #bdbdbd; background: #fcfcfc; }
.tech { width: 371px; }
.names { flex: 1; }
.list table { width: 100%; border-collapse: collapse; }
.tech table { height: 357px; }
.names table { height: 338px; }
.list th { height: 34px; padding: 0 0 0 8px; font-weight: 400; text-align: left; border-bottom: 1px solid #a9a9a9; background: #e1e1e1; box-shadow: inset -1px 0 #d8d8d8; }
.list td { height: 29px; padding: 0 0 0 7px; }
.list .c0, .list .c1 { width: 44px; } .list .c8 { width: 25px; } .list .c9 { width: 29px; }
.sel td { background: #d9d9d9; border: 1px dotted #222; border-width: 1px 0; }
.sel td:first-child { border-left-width: 1px; }
.sel td:last-child { border-right-width: 1px; }
.names th svg { float: right; margin: 6px 5px 0 0; color: #555; }
.names td:first-child { padding-left: 9px; }
.names td input { margin-bottom: 4px; }
.names .grp td { height: 49px; padding-top: 10px; }
.grp svg { display: inline-block; margin-right: 10px; vertical-align: -2px; }
.descr { height: 108px; margin: 12px 0 8px; border: 1px solid #777; border-width: 2px 1px 1px 1px; border-right-color: #ddd; border-bottom-color: #ddd; }
.picks { display: flex; gap: 22px; margin-left: -3px; }
.picks button, .d-foot button { width: 88px; height: 33px; border: 1px solid #8c8c8c; background: #f2f2f2; }
.d-foot { display: flex; justify-content: flex-end; gap: 7px; padding: 7px 11px 9px 0; }
.d-foot button { width: 110px; height: 37px; }
.d-foot .ok { border: 2px solid #2d5f8c; }
.cursor { position: absolute; left: 183px; top: 213px; }

/* player overlay */
.shade { position: absolute; inset: 6px 0 10px; pointer-events: none; background: linear-gradient(to top, rgba(0, 0, 0, .73) 0, rgba(0, 0, 0, .58) 38px, rgba(0, 0, 0, .37) 80px, rgba(0, 0, 0, .32) 140px, rgba(0, 0, 0, .12) 310px, transparent 440px); }
.player::after { content: ""; position: absolute; left: 0; right: 0; bottom: 0; height: 10px; background: #121212; }
.captions { position: absolute; left: 0; right: 0; bottom: 153px; display: flex; flex-direction: column; align-items: center; font: 47px/54px Roboto, sans-serif; color: #fff; }
.captions span { padding: 0 10px; margin-right: 6px; background: rgba(12, 12, 12, .84); white-space: nowrap; }
.progress { position: absolute; left: 0; right: 0; bottom: 106px; height: 6px; background: rgba(255, 255, 255, .2); }
.progress span { position: absolute; left: 0; top: 0; height: 6px; }
.progress .loaded { width: 277px; background: rgba(255, 255, 255, .4); }
.progress .played { width: 5px; background: #f00; }
.autoplay { position: absolute; right: 55px; bottom: 37px; }
```
